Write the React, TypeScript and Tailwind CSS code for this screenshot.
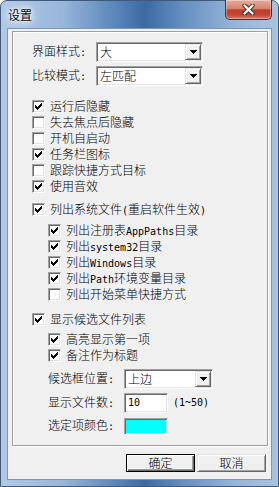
import React from "react";

function T({ s }: { s: string }) {
  const parts = s.split(/([\x20-\x7e]+)/);
  return (
    <>
      {parts.map((p, i) =>
        i % 2 ? (
          <span key={i} className="font-['DejaVu_Sans_Mono',monospace] text-[10px] font-normal">
            {p}
          </span>
        ) : (
          <React.Fragment key={i}>{p}</React.Fragment>
        )
      )}
    </>
  );
}

function Check() {
  const starts = [2, 3, 4, 3, 2, 1, 0];
  return (
    <svg width="7" height="7" viewBox="0 0 7 7" shapeRendering="crispEdges">
      {starts.map((s, i) => (
        <rect key={i} x={i} y={s} width="1" height="3" fill="#000" />
      ))}
    </svg>
  );
}

function CheckBox({ checked }: { checked: boolean }) {
  return (
    <span className="mt-[2px] w-[13px] h-[13px] shrink-0 box-border bg-white border border-t-[#a0a0a0] border-l-[#a0a0a0] border-b-white border-r-white shadow-[inset_1px_1px_0_#696969,inset_-1px_-1px_0_#e3e3e3] flex items-center justify-center">
      {checked ? <Check /> : null}
    </span>
  );
}

function CheckRow({ checked, label }: { checked: boolean; label: string }) {
  return (
    <div className="h-[16px] flex items-start">
      <CheckBox checked={checked} />
      <span className="ml-[5px] leading-[16px] whitespace-nowrap">
        <T s={label} />
      </span>
    </div>
  );
}

function Arrow() {
  return (
    <svg width="7" height="4" viewBox="0 0 7 4" shapeRendering="crispEdges">
      <rect x="0" y="0" width="7" height="1" fill="#000" />
      <rect x="1" y="1" width="5" height="1" fill="#000" />
      <rect x="2" y="2" width="3" height="1" fill="#000" />
      <rect x="3" y="3" width="1" height="1" fill="#000" />
    </svg>
  );
}

function Combo({ className, text }: { className: string; text: string }) {
  return (
    <div
      className={
        "flex h-[20px] box-border p-[1px] bg-white border border-t-[#a0a0a0] border-l-[#a0a0a0] border-b-white border-r-white shadow-[inset_1px_1px_0_#696969,inset_-1px_-1px_0_#e3e3e3] " +
        className
      }
    >
      <span className="flex-1 pl-[2px] leading-[16px] whitespace-nowrap">
        <T s={text} />
      </span>
      <span className="w-[16px] h-[16px] box-border bg-[#f0f0f0] border border-t-[#e3e3e3] border-l-[#e3e3e3] border-b-[#696969] border-r-[#696969] shadow-[inset_1px_1px_0_#fff,inset_-1px_-1px_0_#a0a0a0] flex items-center justify-center">
        <Arrow />
      </span>
    </div>
  );
}

function Sunken({ className, children }: { className: string; children?: React.ReactNode }) {
  return (
    <div
      className={
        "box-border border border-t-[#a0a0a0] border-l-[#a0a0a0] border-b-white border-r-white shadow-[inset_1px_1px_0_#696969,inset_-1px_-1px_0_#e3e3e3] " +
        className
      }
    >
      {children}
    </div>
  );
}

export default function App() {
  return (
    <div className="w-[279px] h-[487px] relative box-border rounded-t-[7px] border border-[#3d5a7c] bg-[linear-gradient(90deg,#b2c9e4_0%,#98b7db_22%,#5884b9_42%,#3b6aa3_52%,#6690c1_66%,#96b4d9_84%,#a9c3e1_100%)] px-[6px] pb-[6px] font-['Noto_Sans_CJK_SC',sans-serif] font-light text-[12px] text-black flex flex-col">
      {/* title bar */}
      <div className="h-[27px] flex items-center pl-[1px]">
        <span className="leading-[16px] text-[#111] font-normal [text-shadow:0_0_4px_#fff,0_0_8px_#fff,0_0_12px_#fff]">设置</span>
      </div>

      {/* close button */}
      <div className="absolute top-[-1px] left-[224px] w-[47px] h-[20px] box-border border border-t-0 border-[#5a2620] rounded-b-[5px] bg-[linear-gradient(180deg,#e8ab9c_0%,#d8826f_45%,#c13f2b_52%,#c04634_78%,#dc7a63_100%)] shadow-[inset_0_0_0_1px_rgba(255,255,255,0.35)] flex items-center justify-center">
        <svg width="13" height="11" viewBox="0 0 13 11">
          <path d="M2.5 1.5 L10.5 9.5 M10.5 1.5 L2.5 9.5" stroke="#3a2a2a" strokeWidth="4.2" strokeLinecap="round" />
          <path d="M2.5 1.5 L10.5 9.5 M10.5 1.5 L2.5 9.5" stroke="#fff" strokeWidth="2.4" strokeLinecap="round" />
        </svg>
      </div>

      {/* client area */}
      <div className="h-[452px] box-border border border-[#7d97b8] bg-[#f0f0f0] flex flex-col">
        <div className="ml-[4px] mt-[2px] w-[256px] h-[415px] box-border border border-[#a0a0a0] shadow-[inset_1px_1px_0_#fff,1px_1px_0_#fff] flex flex-col">
          <div className="mt-[10px] pl-[19px] h-[20px] flex items-center">
            <span className="w-[64px] leading-[16px]">
              <T s="界面样式:" />
            </span>
            <Combo className="w-[107px]" text="大" />
          </div>
          <div className="mt-[4px] pl-[19px] h-[20px] flex items-center">
            <span className="w-[64px] leading-[16px]">
              <T s="比较模式:" />
            </span>
            <Combo className="w-[107px]" text="左匹配" />
          </div>

          <div className="mt-[12px] pl-[19px] flex flex-col">
            <CheckRow checked label="运行后隐藏" />
            <CheckRow checked={false} label="失去焦点后隐藏" />
            <CheckRow checked={false} label="开机自启动" />
            <CheckRow checked label="任务栏图标" />
            <CheckRow checked={false} label="跟踪快捷方式目标" />
            <CheckRow checked label="使用音效" />
          </div>

          <div className="mt-[7px] pl-[19px] flex flex-col">
            <CheckRow checked label="列出系统文件(重启软件生效)" />
          </div>
          <div className="mt-[5px] pl-[35px] flex flex-col">
            <CheckRow checked label="列出注册表AppPaths目录" />
            <CheckRow checked label="列出system32目录" />
            <CheckRow checked label="列出Windows目录" />
            <CheckRow checked label="列出Path环境变量目录" />
            <CheckRow checked={false} label="列出开始菜单快捷方式" />
          </div>

          <div className="mt-[9px] pl-[19px] flex flex-col">
            <CheckRow checked label="显示候选文件列表" />
          </div>
          <div className="mt-[4px] pl-[35px] flex flex-col">
            <CheckRow checked label="高亮显示第一项" />
            <CheckRow checked label="备注作为标题" />
          </div>

          <div className="mt-[6px] pl-[35px] h-[20px] flex items-center">
            <span className="w-[76px] leading-[16px]">
              <T s="候选框位置:" />
            </span>
            <Combo className="w-[89px]" text="上边" />
          </div>
          <div className="mt-[4px] pl-[35px] h-[20px] flex items-center">
            <span className="w-[76px] leading-[16px]">
              <T s="显示文件数:" />
            </span>
            <Sunken className="w-[44px] h-[20px] bg-white pl-[3px] flex items-center">
              <span className="font-['DejaVu_Sans_Mono',monospace] font-normal text-[10px] leading-[16px]">10</span>
            </Sunken>
            <span className="ml-[5px] font-['DejaVu_Sans_Mono',monospace] font-normal text-[10px] leading-[16px]">(1~50)</span>
          </div>
          <div className="mt-[4px] pl-[35px] h-[18px] flex items-center">
            <span className="w-[76px] leading-[16px]">
              <T s="选定项颜色:" />
            </span>
            <Sunken className="w-[44px] h-[17px] bg-[#00ffff]" />
          </div>
        </div>

        <div className="mt-[8px] flex justify-end gap-[2px] pr-[5px]">
          <div className="w-[69px] h-[18px] box-border bg-[#f0f0f0] border border-black shadow-[inset_1px_1px_0_#fff,inset_-1px_-1px_0_#696969,inset_-2px_-2px_0_#a0a0a0] flex items-center justify-center leading-[16px]">
            确定
          </div>
          <div className="w-[69px] h-[18px] box-border bg-[#f0f0f0] border border-t-[#e3e3e3] border-l-[#e3e3e3] border-b-[#696969] border-r-[#696969] shadow-[inset_1px_1px_0_#fff,inset_-1px_-1px_0_#a0a0a0] flex items-center justify-center leading-[16px]">
            取消
          </div>
        </div>
      </div>
    </div>
  );
}
